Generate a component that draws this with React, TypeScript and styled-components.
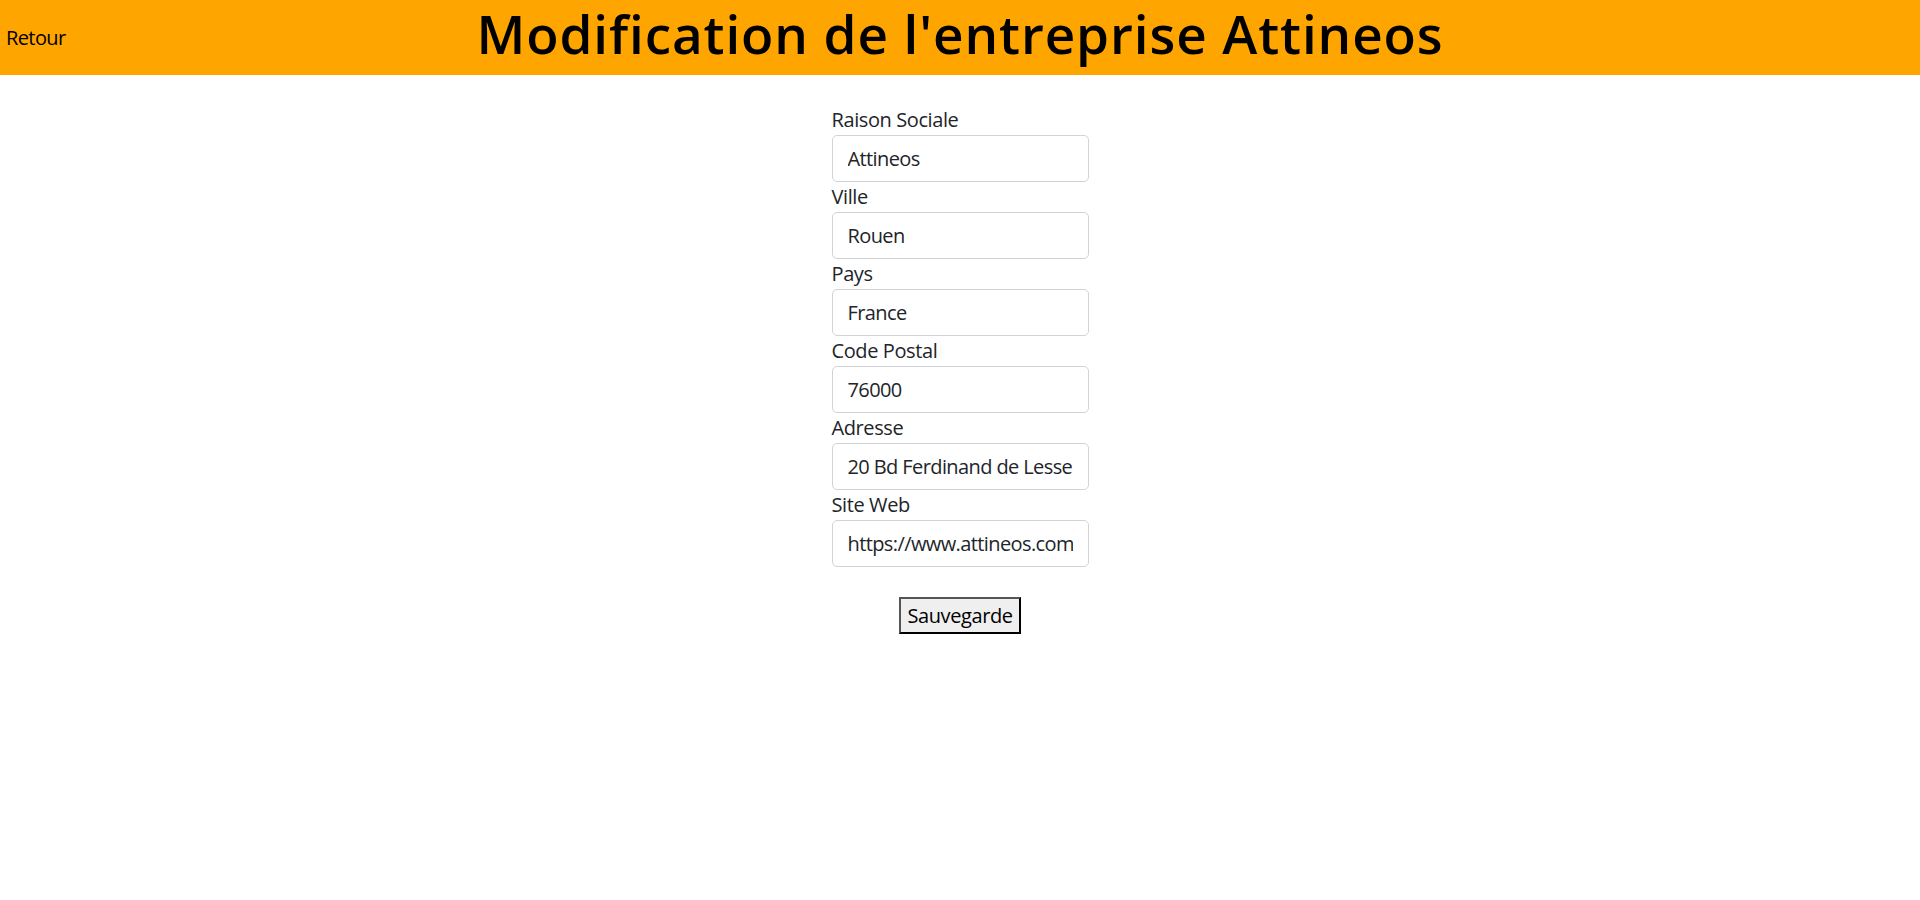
import styled, { createGlobalStyle } from 'styled-components'

const GlobalStyle = createGlobalStyle`
    body {
        margin: 0;
        font-family: "Open Sans", "Noto Sans", sans-serif;
        color: #212529;
        background: #fff;
    }
`

const Header = styled.header`
    display: grid;
    grid-template-columns: 1fr auto 1fr;
    align-items: center;
    height: 75px;
    background-color: #ffa500;
`

const BackLink = styled.a`
    justify-self: start;
    padding-left: 6px;
    font-size: 20px;
    letter-spacing: -0.6px;
    color: #000;
    text-decoration: none;
    cursor: pointer;
`

const Title = styled.h1`
    margin: 0 0 8px 0;
    font-size: 53px;
    font-weight: 600;
    letter-spacing: 0.9px;
    line-height: 60px;
    color: #000;
    white-space: nowrap;
`

const Form = styled.form`
    display: flex;
    flex-direction: column;
    align-items: center;
    padding-top: 30px;
`

const Fields = styled.div`
    display: flex;
    flex-direction: column;
    width: 257px;
`

const Label = styled.label`
    font-size: 20px;
    line-height: 30px;
    letter-spacing: -0.4px;
`

const Input = styled.input`
    box-sizing: border-box;
    width: 100%;
    height: 47px;
    padding: 7px 15px;
    font-family: inherit;
    font-size: 20px;
    letter-spacing: -0.6px;
    color: #212529;
    border: 1.25px solid #ced4da;
    border-radius: 5px;
    background: #fff;
    outline: none;
`

const SaveButton = styled.button`
    margin-top: 30px;
    height: 37px;
    padding: 0 6px;
    font-family: inherit;
    font-size: 20px;
    letter-spacing: -0.4px;
    color: #000;
    background: #efefef;
    border: 2px solid #000;
    border-color: #555 #000 #000 #555;
    cursor: pointer;
`

const fields = [
    { label: 'Raison Sociale', value: 'Attineos' },
    { label: 'Ville', value: 'Rouen' },
    { label: 'Pays', value: 'France' },
    { label: 'Code Postal', value: '76000' },
    { label: 'Adresse', value: '20 Bd Ferdinand de Lesseps' },
    { label: 'Site Web', value: 'https://www.attineos.com' },
]

export default function App() {
    return (
        <>
            <GlobalStyle />
            <Header>
                <BackLink>Retour</BackLink>
                <Title>Modification de l'entreprise Attineos</Title>
            </Header>
            <Form onSubmit={e => e.preventDefault()}>
                <Fields>
                    {fields.map(f => (
                        <div key={f.label} style={{ display: 'contents' }}>
                            <Label>{f.label}</Label>
                            <Input defaultValue={f.value} />
                        </div>
                    ))}
                </Fields>
                <SaveButton type="submit">Sauvegarde</SaveButton>
            </Form>
        </>
    )
}
